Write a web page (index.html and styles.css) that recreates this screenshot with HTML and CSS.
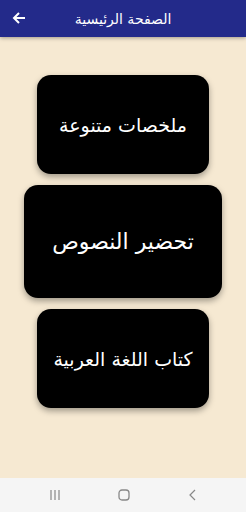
FILE: index.html
```html
<!DOCTYPE html>
<html lang="ar" dir="rtl">
<head>
<meta charset="utf-8">
<link rel="stylesheet" href="styles.css">
</head>
<body>
<div class="screen">
  <header class="appbar">
    <span class="title">الصفحة الرئيسية</span>
    <svg class="back" width="14" height="14" viewBox="0 0 14 14"><path d="M13 7H2M7 2L2 7l5 5" fill="none" stroke="#fff" stroke-width="2"/></svg>
  </header>
  <main class="content">
    <div class="card small">ملخصات متنوعة</div>
    <div class="card big">تحضير النصوص</div>
    <div class="card small">كتاب اللغة العربية</div>
  </main>
  <nav class="navbar" dir="ltr">
    <svg width="12" height="12" viewBox="0 0 12 12"><path d="M2 1v10M6 1v10M10 1v10" stroke="#888" stroke-width="1.2"/></svg>
    <svg width="12" height="12" viewBox="0 0 12 12"><rect x="1" y="1" width="10" height="10" rx="3" fill="none" stroke="#888" stroke-width="1.3"/></svg>
    <svg width="12" height="12" viewBox="0 0 12 12"><path d="M8 1L3 6l5 5" fill="none" stroke="#888" stroke-width="1.2"/></svg>
  </nav>
</div>
</body>
</html>
```
FILE: styles.css
```css
* { box-sizing: border-box; }
html, body { margin: 0; padding: 0; }
body { width: 246px; height: 512px; font-family: "DejaVu Sans", "Noto Sans", sans-serif; }
.screen { width: 246px; height: 512px; display: flex; flex-direction: column; background: #f6e9d2; }
.appbar {
  height: 37px; background: #232a8a; display: flex; align-items: center; justify-content: center;
  position: relative; box-shadow: 0 1px 4px rgba(0,0,0,0.35); z-index: 1;
}
.title { color: #fff; font-size: 14px; }
.back { position: absolute; left: 12px; top: 11px; }
.content {
  flex: 1; display: flex; flex-direction: column; align-items: center;
  padding-top: 38px; gap: 11px;
}
.card {
  background: #000; color: #fff; display: flex; align-items: center; justify-content: center;
  border-radius: 14px; box-shadow: 0 3px 6px rgba(0,0,0,0.35);
}
.card.small { width: 172px; height: 99px; font-size: 19px; }
.card.big { width: 198px; height: 113px; font-size: 22px; }
.navbar {
  height: 34px; background: #f5f5f5; display: flex; align-items: center; justify-content: space-between;
  padding: 0 47px 0 49px;
}
```
